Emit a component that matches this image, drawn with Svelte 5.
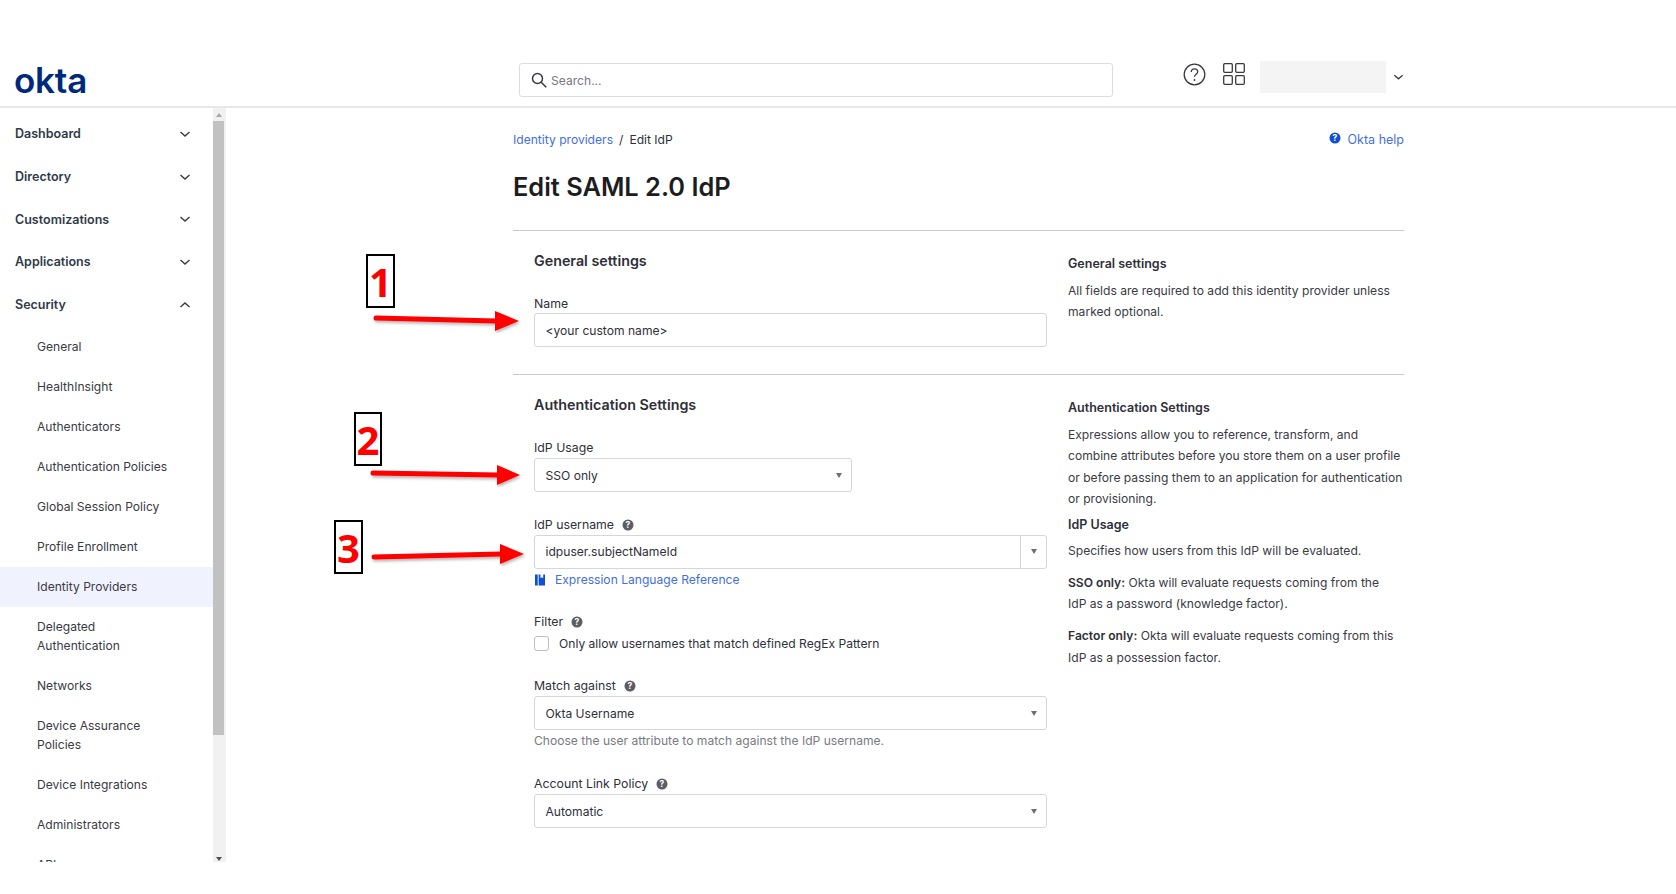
<script>
	const topItems = ['Dashboard', 'Directory', 'Customizations', 'Applications']
	const subItems = [
		'General',
		'HealthInsight',
		'Authenticators',
		'Authentication Policies',
		'Global Session Policy',
		'Profile Enrollment',
		'Identity Providers',
		'Delegated Authentication',
		'Networks',
		'Device Assurance Policies',
		'Device Integrations',
		'Administrators',
		'API'
	]
	const arrows = [
		{ x1: 376, y1: 318, x2: 496, y2: 321, tip: 519 },
		{ x1: 373, y1: 473, x2: 498, y2: 475, tip: 520 },
		{ x1: 374, y1: 557, x2: 501, y2: 554, tip: 524 }
	]
</script>

{#snippet hint()}
	<svg class="hint" viewBox="0 0 12 12"><circle cx="6" cy="6" r="5.5" fill="#5d5d66" /><text x="6" y="9" text-anchor="middle" class="hint-q">?</text></svg>
{/snippet}

{#snippet chevron(up = false)}
	<svg class="chev" viewBox="0 0 12 8"><path d={up ? 'M1.5 6 6 2l4.5 4' : 'M1.5 2 6 6l4.5-4'} fill="none" stroke="#3a3a42" stroke-width="1.4" /></svg>
{/snippet}

{#snippet caret()}
	<span class="caret"></span>
{/snippet}

<div class="page">
	<header>
		<div class="logo">okta</div>
		<div class="search">
			<svg width="16" height="16" viewBox="0 0 16 16"><circle cx="6.5" cy="6.5" r="5" fill="none" stroke="#3a3a42" stroke-width="1.5" /><path d="m10.2 10.2 5 5" stroke="#3a3a42" stroke-width="1.6" /></svg>
			<span>Search...</span>
		</div>
		<div class="tools">
			<svg class="help" width="23" height="23" viewBox="0 0 23 23"><circle cx="11.5" cy="11.5" r="10.3" fill="none" stroke="#3a3a42" stroke-width="1.3" /><path d="M8.3 9c0-2 1.4-3.2 3.2-3.2s3.2 1.2 3.2 2.9c0 2.500-3.200 2.500-3.200 5.100" fill="none" stroke="#3a3a42" stroke-width="1.3" /><circle cx="11.500" cy="17" r="0.900" fill="#3a3a42" /></svg>
			<svg class="apps" width="22" height="22" viewBox="0 0 22 22"><g fill="none" stroke="#3a3a42" stroke-width="1.300"><rect x="0.700" y="0.700" width="8.600" height="8.600" rx="1" /><rect x="12.700" y="0.700" width="8.600" height="8.600" rx="1" /><rect x="0.700" y="12.700" width="8.600" height="8.600" rx="1" /><rect x="12.700" y="12.700" width="8.600" height="8.600" rx="1" /></g></svg>
			<div class="user"></div>
			{@render chevron()}
		</div>
	</header>

	<div class="body">
		<aside>
			<nav>
				{#each topItems as item}
					<div class="top-item">{item}{@render chevron()}</div>
				{/each}
				<div class="top-item">Security{@render chevron(true)}</div>
				{#each subItems as item}
					<div class="sub-item" class:active={item === 'Identity Providers'}>{item}</div>
				{/each}
			</nav>
			<div class="scrollbar">
				<span class="up"></span>
				<div class="thumb"></div>
				<span class="down"></span>
			</div>
		</aside>

		<main>
			<div class="crumbs">
				<a href="#top">Identity providers</a>
				<span class="slash">/</span>
				<span>Edit IdP</span>
				<a class="okta-help" href="#top">
					<svg width="12" height="12" viewBox="0 0 12 12"><circle cx="6" cy="6" r="5.500" fill="#0f4fd6" /><text x="6" y="9" text-anchor="middle" class="hint-q">?</text></svg>
					Okta help
				</a>
			</div>
			<h1>Edit SAML 2.0 IdP</h1>

			<section class="general">
				<div class="form">
					<h2>General settings</h2>
					<label for="name">Name</label>
					<div id="name" class="input">&lt;your custom name&gt;</div>
				</div>
				<div class="side">
					<h3>General settings</h3>
					<p>All fields are required to add this identity provider unless marked optional.</p>
				</div>
			</section>

			<section class="auth">
				<div class="form">
					<h2>Authentication Settings</h2>
					<div class="field usage">
						<div class="label">IdP Usage</div>
						<div class="input narrow">SSO only{@render caret()}</div>
					</div>
					<div class="field username">
						<div class="label">IdP username {@render hint()}</div>
						<div class="input split"><span>idpuser.subjectNameId</span><span class="drop">{@render caret()}</span></div>
						<a class="ref" href="#top">
							<svg width="10" height="12" viewBox="0 0 11 12"><path d="M0 0h3v12H0zM4 0h2v4l1.500-1L9 4V0h2v12H4z" fill="#0f4fd6" /></svg>
							Expression Language Reference
						</a>
					</div>
					<div class="field filter">
						<div class="label">Filter {@render hint()}</div>
						<div class="check"><span class="box"></span>Only allow usernames that match defined RegEx Pattern</div>
					</div>
					<div class="field match">
						<div class="label">Match against {@render hint()}</div>
						<div class="input">Okta Username{@render caret()}</div>
						<div class="note">Choose the user attribute to match against the IdP username.</div>
					</div>
					<div class="field link">
						<div class="label">Account Link Policy {@render hint()}</div>
						<div class="input">Automatic{@render caret()}</div>
					</div>
				</div>
				<div class="side">
					<h3>Authentication Settings</h3>
					<p>Expressions allow you to reference, transform, and combine attributes before you store them on a user profile or before passing them to an application for authentication or provisioning.</p>
					<h3 class="sub">IdP Usage</h3>
					<p class="tight">Specifies how users from this IdP will be evaluated.</p>
					<p class="gap"><b>SSO only:</b> Okta will evaluate requests coming from the<br />IdP as a password (knowledge factor).</p>
					<p class="gap"><b>Factor only:</b> Okta will evaluate requests coming from this IdP as a possession factor.</p>
				</div>
			</section>
		</main>
	</div>

	<!-- annotations drawn over the screenshot -->
	<div class="tag one">1</div>
	<div class="tag two">2</div>
	<div class="tag three">3</div>
	<svg class="arrows" width="1676" height="894">
		<defs>
			<filter id="soft"><feDropShadow dx="1" dy="2" stdDeviation="1.500" flood-color="#000" flood-opacity="0.300" /></filter>
		</defs>
		{#each arrows as a}
			<g filter="url(#soft)">
				<line x1={a.x1} y1={a.y1} x2={a.x2} y2={a.y2} stroke="#f00" stroke-width="5" stroke-linecap="round" />
				<polygon points="{a.x2 - 1},{a.y2 - 10} {a.tip},{a.y2} {a.x2 - 1},{a.y2 + 10}" fill="#f00" />
			</g>
		{/each}
	</svg>
</div>

<style>
	:global(body) {
		margin: 0;
		background: #fff;
	}

	.page {
		position: relative;
		width: 1676px;
		height: 894px;
		overflow: hidden;
		font-family: Inter, 'Noto Sans', sans-serif;
		font-size: 12.1px;
		color: #2f2f38;
	}

	header {
		height: 106px;
		border-bottom: 2px solid #e8e8e8;
		display: flex;
		align-items: flex-start;
	}

	.logo {
		width: 519px;
		flex: none;
		padding: 58px 0 0 14px;
		box-sizing: border-box;
		font-weight: 600;
		font-size: 35px;
		line-height: 44px;
		letter-spacing: -0.2px;
		color: #00297a;
	}

	.search {
		margin-top: 63px;
		width: 594px;
		height: 34px;
		box-sizing: border-box;
		border: 1.500px solid #dcdce0;
		border-radius: 3px;
		display: flex;
		align-items: center;
		gap: 4px;
		padding-left: 11px;
		color: #77777f;
	}

	.tools {
		display: flex;
		align-items: center;
		margin-left: 70px;
		height: 32px;
		margin-top: 61px;
	}

	.help {
		margin-top: -6px;
	}

	.apps {
		margin: -6px 0 0 17px;
	}

	.user {
		width: 126px;
		height: 32px;
		margin-left: 15px;
		background: #f4f4f4;
	}

	.tools .chev {
		margin-left: 7px;
		width: 11px;
	}

	.chev {
		width: 12px;
		height: 8px;
	}

	.body {
		display: flex;
	}

	aside {
		width: 226px;
		height: 754px;
		display: flex;
		flex: none;
	}

	nav {
		width: 213px;
		height: 754px;
		overflow: hidden;
		padding-top: 4.500px;
		box-sizing: border-box;
	}

	.top-item {
		height: 42.700px;
		display: flex;
		align-items: center;
		justify-content: space-between;
		padding: 0 22px 0 15px;
		font-size: 12.500px;
		font-weight: 600;
		color: #2f3a4a;
	}

	.sub-item {
		padding: 10.700px 40px 10.700px 37px;
		line-height: 18.700px;
		color: #3a3a42;
	}

	.top-item + .sub-item {
		margin-top: 1px;
	}

	.sub-item.active {
		background: #f0f3fd;
	}

	.scrollbar {
		width: 13px;
		background: #f1f1f1;
		display: flex;
		flex-direction: column;
		align-items: center;
	}

	.thumb {
		width: 11px;
		height: 614px;
		background: #c1c1c1;
		margin: 4px 2px 0 0;
	}

	.up,
	.down {
		width: 0;
		height: 0;
		border-left: 3.500px solid transparent;
		border-right: 3.500px solid transparent;
		margin-top: 5px;
		margin-right: 2px;
	}

	.up {
		border-bottom: 4px solid #a8a8a8;
	}

	.down {
		border-top: 4px solid #505050;
		margin-top: 122px;
	}

	main {
		width: 891px;
		margin-left: 287px;
	}

	a {
		color: #3f6fe0;
		text-decoration: none;
	}

	.crumbs {
		display: flex;
		align-items: center;
		gap: 6px;
		height: 20px;
		margin-top: 21px;
	}

	.okta-help {
		margin-left: auto;
		display: flex;
		align-items: center;
		gap: 7px;
		font-size: 12.500px;
	}

	.okta-help svg {
		margin-top: -3px;
	}

	h1 {
		margin: 23px 0 0;
		font-size: 25.400px;
		line-height: 30px;
		font-weight: 600;
		color: #1d1d21;
	}

	section {
		display: flex;
		gap: 21px;
		padding: 0 0 0 21px;
		border-top: 1.500px solid #c9c9d0;
	}

	.general {
		margin-top: 28px;
		height: 143px;
	}

	.form {
		width: 513px;
		flex: none;
	}

	h2 {
		margin: 21px 0 0;
		font-size: 14.300px;
		line-height: 18px;
		font-weight: 600;
		color: #2f2f38;
	}

	.general label,
	.label {
		display: flex;
		align-items: center;
		gap: 8px;
		font-size: 12.300px;
		line-height: 16px;
	}

	.general label {
		margin-top: 25.500px;
		margin-bottom: -0.500px;
	}

	.input {
		position: relative;
		box-sizing: border-box;
		height: 34px;
		margin-top: 2px;
		border: 1.500px solid #d6d6da;
		border-radius: 3px;
		display: flex;
		align-items: center;
		padding-left: 10.500px;
		color: #2f2f38;
	}

	.narrow {
		width: 318px;
	}

	.caret {
		position: absolute;
		right: 9px;
		top: 13.500px;
		width: 0;
		height: 0;
		border-left: 3.200px solid transparent;
		border-right: 3.200px solid transparent;
		border-top: 5px solid #6e6e78;
	}

	.drop {
		position: absolute;
		right: 0;
		top: 0;
		bottom: 0;
		width: 25px;
		border-left: 1.500px solid #d6d6da;
	}

	.ref {
		display: flex;
		align-items: center;
		gap: 10px;
		margin-top: 2.500px;
		margin-left: 1px;
		line-height: 18px;
	}

	.field {
		margin-top: 25px;
	}

	.field.usage {
		margin-top: 26px;
	}

	.field.username {
		margin-top: 24.500px;
	}

	.field.match {
		margin-top: 25.500px;
	}

	.field.link {
		margin-top: 26px;
	}

	.check {
		display: flex;
		align-items: center;
		gap: 10px;
		margin-top: 4.500px;
		line-height: 18px;
	}

	.box {
		width: 13px;
		height: 13px;
		border: 1.500px solid #bdbdc3;
		border-radius: 3px;
	}

	.note {
		margin-top: 2px;
		line-height: 18px;
		color: #7a7a82;
	}

	.side {
		flex: 1;
		line-height: 21.400px;
		color: #3a3a42;
	}

	h3 {
		margin: 21.500px 0 0;
		font-size: 12.500px;
		line-height: 21.400px;
		font-weight: 600;
		color: #2f2f38;
	}

	h3.sub {
		margin-top: 4px;
	}

	p {
		margin: 6px 0 0;
	}

	p.tight {
		margin-top: 5px;
	}

	p.gap {
		margin-top: 10.500px;
	}

	p b {
		font-weight: 600;
		color: #2f2f38;
	}

	.hint {
		width: 12px;
		height: 12px;
	}

	.hint-q {
		font-size: 8.500px;
		font-weight: 700;
		fill: #fff;
	}

	.tag {
		position: absolute;
		box-sizing: border-box;
		width: 28px;
		height: 54px;
		border: 2px solid #000;
		background: #fff;
		color: #f00;
		font-family: 'Open Sans', sans-serif;
		font-weight: 700;
		font-size: 40px;
		line-height: 52px;
		text-align: center;
	}

	.one {
		left: 366px;
		top: 254px;
		width: 29px;
	}

	.two {
		left: 354px;
		top: 412px;
	}

	.three {
		left: 334px;
		top: 520px;
		width: 29px;
	}

	.arrows {
		position: absolute;
		left: 0;
		top: 0;
		pointer-events: none;
	}
</style>
